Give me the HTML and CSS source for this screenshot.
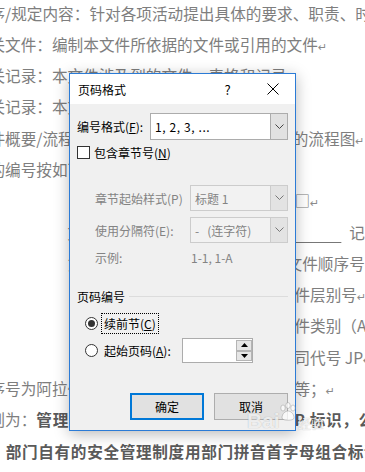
FILE: index.html
```html
<!DOCTYPE html>
<html lang="zh-CN">
<head>
<meta charset="utf-8">
<title>页码格式</title>
<link rel="stylesheet" href="styles.css">
</head>
<body>
<div class="doc">
  <p class="ln">序/规定内容：针对各项活动提出具体的要求、职责、时间</p>
  <p class="ln">关文件：编制本文件所依据的文件或引用的文件<span class="pm">↵</span></p>
  <p class="ln">关记录：本文件涉及到的文件、表格和记录<span class="pm">↵</span></p>
  <p class="ln">关记录：本文件运行中所产生的质量类记录<span class="pm">↵</span></p>
  <p class="ln">件概要/流程图：描述本程序所涉及活动文件的流程图<span class="pm">↵</span></p>
  <p class="ln">的编号按如下规则编写：<span class="pm">↵</span></p>
  <p class="ln">　　　　　　　&ensp;受控状态：受控■　非受控□<span class="pm">↵</span></p>
  <p class="ln">　　　　　文件编号：<u>　　　　　　　　　　　　　</u>&ensp;记录编号</p>
  <p class="ln">　　　　　第一位为公司代号，最末两位为文件顺序号；<span class="pm">↵</span></p>
  <p class="ln">　　　　　&ensp;中间数字表示所属文件类型的文件层别号<span class="pm">↵</span></p>
  <p class="ln">　　　　　&ensp;第二组英文字母代表的是所属文件类别（A）<span class="pm">↵</span></p>
  <p class="ln">　　　　　&ensp;第一组英文字母表示的是集团公司代号 JP<span class="pm">↵</span></p>
  <p class="ln">序号为阿拉伯数字，按一、二、三顺序编号&ensp;等；<span class="pm">↵</span></p>
  <p class="ln">则为：<b>管理制度、程序文件均用公司代号 JP 标识，公司</b></p>
  <p class="ln"><b>，部门自有的安全管理制度用部门拼音首字母组合标识</b></p>
</div>

<div class="dialog">
  <div class="titlebar">
    <span class="title">页码格式</span>
    <span class="tb-btn help">?</span>
    <span class="tb-btn close">
      <svg width="12" height="12" viewBox="0 0 12 12"><path d="M0.5 0.5 L11.5 11.5 M11.5 0.5 L0.5 11.5" stroke="#000" stroke-width="1" fill="none"/></svg>
    </span>
  </div>
  <div class="body">
    <div class="row fmt-row">
      <span class="lbl fmt-lbl">编号格式(<u>F</u>):</span>
      <div class="combo">
        <span class="val wide">1, 2, 3, ...</span>
        <span class="dd"><svg width="9" height="6" viewBox="0 0 9 6"><path d="M0.5 0.5 L4.5 4.5 L8.5 0.5" stroke="#444" stroke-width="1" fill="none"/></svg></span>
      </div>
    </div>

    <div class="row chk-row">
      <span class="checkbox"></span>
      <span class="chk-lbl">包含章节号(<u>N</u>)</span>
    </div>

    <div class="row sub-row first-sub">
      <span class="lbl sub-lbl dis">章节起始样式(P)</span>
      <div class="combo disabled">
        <span class="val">标题 1</span>
        <span class="dd"><svg width="9" height="6" viewBox="0 0 9 6"><path d="M0.5 0.5 L4.5 4.5 L8.5 0.5" stroke="#777" stroke-width="1" fill="none"/></svg></span>
      </div>
    </div>

    <div class="row sub-row">
      <span class="lbl sub-lbl dis">使用分隔符(E):</span>
      <div class="combo disabled">
        <span class="val">-&nbsp;&nbsp;&nbsp;(连字符)</span>
        <span class="dd"><svg width="9" height="6" viewBox="0 0 9 6"><path d="M0.5 0.5 L4.5 4.5 L8.5 0.5" stroke="#777" stroke-width="1" fill="none"/></svg></span>
      </div>
    </div>

    <div class="row sample-row">
      <span class="lbl sample-lbl dis">示例:</span>
      <span class="dis">1-1, 1-A</span>
    </div>

    <div class="row group-row">
      <span class="group-title">页码编号</span>
      <span class="group-line"></span>
    </div>

    <div class="row radio-row r1">
      <span class="radio checked"></span>
      <span class="opt-lbl focus">续前节(<u>C</u>)</span>
    </div>

    <div class="row radio-row r2">
      <span class="radio"></span>
      <span class="opt-lbl start-lbl">起始页码(<u>A</u>):</span>
      <div class="spin">
        <span class="spin-field"></span>
        <span class="spin-btns">
          <span class="spin-btn"><svg width="7" height="4" viewBox="0 0 7 4"><path d="M0 4 L3.5 0 L7 4 Z" fill="#000"/></svg></span>
          <span class="spin-btn"><svg width="7" height="4" viewBox="0 0 7 4"><path d="M0 0 L3.5 4 L7 0 Z" fill="#000"/></svg></span>
        </span>
      </div>
    </div>

    <div class="row btn-row">
      <span class="btn primary">确定</span>
      <span class="btn">取消</span>
    </div>
  </div>
</div>

<div class="watermark">
  <span class="wm-bai">Bai</span>
  <svg class="wm-paw" width="20" height="20" viewBox="0 0 20 20">
    <g fill="rgba(255,255,255,0.75)" stroke="rgba(120,120,120,0.35)" stroke-width="1">
      <ellipse cx="5" cy="6" rx="2.2" ry="3"/>
      <ellipse cx="10" cy="3.5" rx="2.2" ry="3"/>
      <ellipse cx="15" cy="6" rx="2.2" ry="3"/>
      <path d="M4 16 C4 11 8 9 10 9 C12 9 16 11 16 16 C16 19 4 19 4 16 Z"/>
    </g>
  </svg>
  <span class="wm-jy">经验</span>
</div>
</body>
</html>
```

FILE: styles.css
```css
html, body {
  margin: 0;
  padding: 0;
}

body {
  width: 365px;
  height: 472px;
  overflow: hidden;
  background: #ffffff;
  position: relative;
  font-family: "Noto Sans CJK SC", "Noto Sans", sans-serif;
}

/* ---------- background document ---------- */
.doc {
  margin: -2.5px 0 0 -10.6px;
  font-size: 15.65px;
  line-height: 31.3px;
  color: #7e7e7e;
}

.ln {
  margin: 0;
  height: 31.3px;
  white-space: nowrap;
}

.ln b {
  font-weight: 700;
  color: #5a5a5a;
  letter-spacing: 0.65px;
}

.ln u {
  text-decoration-color: #777777;
  text-underline-offset: 3px;
}

.pm {
  font-family: "DejaVu Sans", sans-serif;
  font-size: 11px;
  line-height: 1;
  color: #8a8a8a;
}

/* ---------- dialog ---------- */
.dialog {
  position: absolute;
  left: 69px;
  top: 73px;
  width: 227px;
  height: 358px;
  box-sizing: border-box;
  border: 1px solid #2b7bd6;
  background: #f0f0f0;
  box-shadow: 0 3px 14px rgba(0, 0, 0, 0.28);
  font-family: "Noto Sans CJK SC", sans-serif;
  font-size: 12px;
  color: #000000;
  display: flex;
  flex-direction: column;
}

.titlebar {
  height: 30px;
  background: #ffffff;
  display: flex;
  align-items: center;
  padding-left: 8px;
}

.title {
  flex: 1;
}

.tb-btn {
  width: 45px;
  height: 30px;
  display: flex;
  align-items: center;
  justify-content: center;
}

.help {
  font-size: 13px;
}

.body {
  flex: 1;
  padding: 9px 7px 9px 7px;
  display: flex;
  flex-direction: column;
}

.row {
  display: flex;
  align-items: center;
}

.fmt-row {
  height: 27px;
}

.fmt-lbl {
  width: 73px;
  flex: none;
}

.combo {
  flex: 1;
  align-self: stretch;
  display: flex;
  background: #ffffff;
  border: 1px solid #acacac;
}

.combo .val {
  flex: 1;
  display: flex;
  align-items: center;
  padding-left: 4px;
}

.combo .val.wide {
  letter-spacing: 0.6px;
}

.combo .dd {
  width: 16px;
  background: #e1e1e1;
  border-left: 1px solid #acacac;
  display: flex;
  align-items: center;
  justify-content: center;
}

.combo.disabled {
  background: #f2f2f2;
  border-color: #cccccc;
  color: #838383;
}

.combo.disabled .dd {
  background: #e3e3e3;
  border-left-color: #cccccc;
}

.chk-row {
  height: 20px;
  margin-top: 2px;
}

.checkbox {
  width: 13px;
  height: 13px;
  box-sizing: border-box;
  border: 1px solid #333333;
  background: #ffffff;
}

.chk-lbl {
  margin-left: 4px;
}

.sub-row {
  height: 26px;
  margin-top: 6px;
  margin-left: 18px;
}

.first-sub {
  margin-top: 23px;
}

.sub-lbl {
  width: 95px;
  flex: none;
}

.dis {
  color: #838383;
}

.sample-row {
  height: 20px;
  margin-top: 4px;
  margin-left: 18px;
}

.sample-lbl {
  width: 96px;
  flex: none;
}

.group-row {
  height: 20px;
  margin-top: 19px;
}

.group-line {
  flex: 1;
  height: 1px;
  background: #dcdcdc;
  margin-left: 4px;
}

.radio-row {
  margin-left: 8px;
}

.r1 {
  height: 21px;
  margin-top: 7px;
}

.r2 {
  height: 25px;
  margin-top: 4px;
}

.radio {
  width: 13px;
  height: 13px;
  box-sizing: border-box;
  border: 1px solid #333333;
  border-radius: 50%;
  background: #ffffff;
  display: flex;
  align-items: center;
  justify-content: center;
}

.radio.checked::after {
  content: "";
  width: 7px;
  height: 7px;
  border-radius: 50%;
  background: #333333;
}

.opt-lbl {
  margin-left: 3px;
  padding: 0 2px;
  border: 1px solid transparent;
  height: 19px;
  display: flex;
  align-items: center;
}

.opt-lbl.focus {
  border: 1px dotted #000000;
}

.start-lbl {
  width: 75px;
  flex: none;
}

.spin {
  width: 71px;
  height: 25px;
  box-sizing: border-box;
  border: 1px solid #acacac;
  background: #ffffff;
  display: flex;
}

.spin-field {
  flex: 1;
}

.spin-btns {
  width: 16px;
  display: flex;
  flex-direction: column;
  padding: 1px 0;
}

.spin-btn {
  flex: 1;
  background: #e6e6e6;
  border: 1px solid #b5b5b5;
  display: flex;
  align-items: center;
  justify-content: center;
}

.btn-row {
  height: 27px;
  margin-top: 30px;
  justify-content: flex-end;
  gap: 10px;
}

.btn {
  width: 74px;
  height: 27px;
  box-sizing: border-box;
  background: #e1e1e1;
  border: 1px solid #adadad;
  display: flex;
  align-items: center;
  justify-content: center;
}

.btn.primary {
  border: 2px solid #0078d7;
}

/* ---------- watermark ---------- */
.watermark {
  position: absolute;
  left: 247px;
  top: 402px;
  display: flex;
  align-items: flex-end;
  font-family: "Liberation Sans", sans-serif;
  color: rgba(255, 255, 255, 0.8);
  text-shadow: 0 0 1px rgba(90, 90, 90, 0.45);
  pointer-events: none;
}

.wm-bai {
  font-size: 21px;
  font-weight: 700;
  line-height: 38px;
}

.wm-paw {
  align-self: flex-start;
  margin-left: -2px;
}

.wm-jy {
  font-family: "Noto Sans CJK SC", sans-serif;
  font-size: 13px;
  line-height: 34px;
  margin-left: 0;
}
```
